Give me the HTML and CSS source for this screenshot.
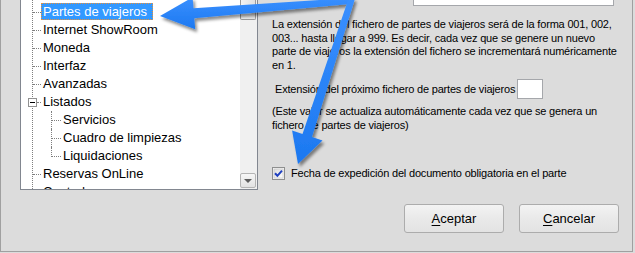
FILE: index.html
```html
<!DOCTYPE html>
<html lang="es">
<head>
<meta charset="utf-8">
<title>Partes de viajeros</title>
<link rel="stylesheet" href="styles.css">
</head>
<body>
<div class="dialog">
  <div class="tree-box">
    <div class="tree-content">
      <div class="level0">
        <div class="row"><span class="dots"></span><span class="label selected">Partes de viajeros</span></div>
        <div class="row"><span class="dots"></span><span class="label">Internet ShowRoom</span></div>
        <div class="row"><span class="dots"></span><span class="label">Moneda</span></div>
        <div class="row"><span class="dots"></span><span class="label">Interfaz</span></div>
        <div class="row"><span class="dots"></span><span class="label">Avanzadas</span></div>
        <div class="row"><span class="expander"></span><span class="dots short"></span><span class="label">Listados</span></div>
        <div class="children">
          <div class="crow"><span class="conn"></span><span class="label">Servicios</span></div>
          <div class="crow"><span class="conn"></span><span class="label">Cuadro de limpiezas</span></div>
          <div class="crow"><span class="conn"></span><span class="label">Liquidaciones</span></div>
        </div>
        <div class="row"><span class="dots"></span><span class="label">Reservas OnLine</span></div>
        <div class="row"><span class="dots"></span><span class="label">Contadores</span></div>
      </div>
    </div>
    <div class="scrollbar">
      <div class="thumb"></div>
      <div class="track"></div>
      <div class="arrow-btn"><span class="tri"></span></div>
    </div>
  </div>

  <div class="settings">
    <div class="top-field"></div>
    <p class="desc">La extensión del fichero de partes de viajeros será de la forma 001, 002,<br>003... hasta llegar a 999. Es decir, cada vez que se genere un nuevo<br>parte de viajeros la extensión del fichero se incrementará numéricamente<br>en 1.</p>
    <div class="ext-row">
      <span class="ext-label">Extensión del próximo fichero de partes de viajeros</span>
      <span class="ext-input"></span>
    </div>
    <p class="note">(Este valor se actualiza automáticamente cada vez que se genera un<br>fichero de partes de viajeros)</p>
    <div class="check-row">
      <svg class="checkbox" width="13" height="13" viewBox="0 0 13 13">
        <defs>
          <linearGradient id="cbg" x1="0" y1="0" x2="1" y2="1">
            <stop offset="0" stop-color="#dcdcdc"/>
            <stop offset="1" stop-color="#ffffff"/>
          </linearGradient>
        </defs>
        <rect x="0.5" y="0.5" width="12" height="12" fill="#f4f4f4" stroke="#8e8f8f"/>
        <rect x="2" y="2" width="9" height="9" fill="url(#cbg)" stroke="#c4c4c4" stroke-width="0.6"/>
        <path d="M3 6.3 L5.4 8.8 L10 3.6" fill="none" stroke="#1f3fbf" stroke-width="2"/>
      </svg>
      <span class="check-label">Fecha de expedición del documento obligatoria en el parte</span>
    </div>
    <div class="buttons">
      <div class="btn"><u>A</u>ceptar</div>
      <div class="btn"><u>C</u>ancelar</div>
    </div>
  </div>
</div>

<svg class="annotations" width="635" height="253" viewBox="0 0 635 253">
  <defs>
    <filter id="shadow" x="-20%" y="-20%" width="140%" height="140%">
      <feDropShadow dx="2" dy="3" stdDeviation="1.6" flood-color="#000" flood-opacity="0.45"/>
    </filter>
    <linearGradient id="blue" x1="0" y1="0" x2="0" y2="1">
      <stop offset="0" stop-color="#3a90ff"/>
      <stop offset="1" stop-color="#1c78f0"/>
    </linearGradient>
  </defs>
  <g filter="url(#shadow)" fill="url(#blue)">
    <polygon points="160,16 195.2,29.3 194.3,18.3 350.2,4 349.8,-2 193.5,8.3 192.6,-2.7"/>
    <polygon points="298,164 322.5,140.4 312,137 354.9,-1.1 349.1,-2.9 302.5,133.9 292.1,130.5"/>
  </g>
</svg>
</body>
</html>
```

FILE: styles.css
```css
html, body {
  margin: 0;
  padding: 0;
}

body {
  position: relative;
  width: 635px;
  height: 253px;
  overflow: hidden;
  background: #dcdcdc;
  font-family: "Liberation Sans", Arial, sans-serif;
  color: #000;
}

.dialog {
  box-sizing: border-box;
  width: 633px;
  height: 252px;
  border: 1px solid #a0a0a0;
  border-top: none;
  display: flex;
  align-items: flex-start;
}

/* ---------- tree ---------- */
.tree-box {
  box-sizing: border-box;
  margin-left: 19px;
  width: 238px;
  height: 190px;
  border: 1px solid #828790;
  border-top: none;
  background: #fff;
  display: flex;
}

.tree-content {
  flex: 1;
  overflow: hidden;
  padding-left: 11px;
}

.level0 {
  box-sizing: border-box;
  height: 189px;
  padding-top: 3px;
  border-left: 1px dotted #7f7f7f;
}

.row,
.crow {
  display: flex;
  align-items: flex-start;
  height: 18px;
}

.dots {
  box-sizing: border-box;
  flex: none;
  width: 8px;
  height: 10px;
  border-bottom: 1px dotted #7f7f7f;
}

.dots.short {
  width: 4px;
}

.expander {
  box-sizing: border-box;
  flex: none;
  width: 9px;
  height: 9px;
  margin-top: 5px;
  margin-left: -5px;
  border: 1px solid #919191;
  background: linear-gradient(#000, #000) center / 5px 1px no-repeat, #fff;
}

.label {
  box-sizing: border-box;
  height: 17px;
  line-height: 15px;
  padding: 0 1px;
  border: 1px solid transparent;
  font-size: 13px;
  white-space: nowrap;
}

.label.selected {
  background: #3399ff;
  color: #fff;
  border: 1px dotted #e8913a;
  padding-right: 5px;
}

.children {
  margin-left: 18px;
}

.crow {
  border-left: 1px dotted #7f7f7f;
}

.crow:last-child {
  border-left: none;
}

.conn {
  box-sizing: border-box;
  flex: none;
  width: 9px;
  height: 10px;
  border-bottom: 1px dotted #7f7f7f;
}

.crow:last-child .conn {
  width: 10px;
  border-left: 1px dotted #7f7f7f;
}

/* ---------- scrollbar ---------- */
.scrollbar {
  flex: none;
  width: 17px;
  background: #f0f0f0;
  display: flex;
  flex-direction: column;
}

.thumb {
  box-sizing: border-box;
  height: 20px;
  margin: 0 1px 0 0;
  border: 1px solid #9a9a9a;
  border-top: none;
  border-radius: 0 0 2px 2px;
  background: linear-gradient(to right, #f3f3f3, #e0e0e0);
}

.track {
  flex: 1;
}

.arrow-btn {
  box-sizing: border-box;
  height: 15px;
  margin: 0 1px 1px 0;
  border: 1px solid #b4b4b4;
  border-radius: 2px;
  background: linear-gradient(#f6f6f6, #e2e2e2);
  display: flex;
  align-items: center;
  justify-content: center;
}

.tri {
  width: 0;
  height: 0;
  border-left: 4px solid transparent;
  border-right: 4px solid transparent;
  border-top: 4px solid #5d5d5d;
}

/* ---------- settings ---------- */
.settings {
  flex: 1;
  margin-left: 14px;
  display: flex;
  flex-direction: column;
  font-size: 11px;
  letter-spacing: -0.18px;
}

.top-field {
  box-sizing: border-box;
  margin-left: 141px;
  width: 201px;
  height: 6px;
  border: 1px solid #a5a7ab;
  border-top: none;
  background: #fff;
}

.desc {
  margin: 12px 0 0;
  line-height: 13.6px;
  white-space: nowrap;
}

.ext-row {
  margin-top: 6.6px;
  display: flex;
  align-items: center;
  height: 20px;
}

.ext-label {
  margin-left: 3px;
  width: 242px;
  white-space: nowrap;
}

.ext-input {
  box-sizing: border-box;
  width: 26px;
  height: 20px;
  border: 1px solid #a5a7ab;
  background: #fff;
}

.note {
  margin: 5px 0 0;
  line-height: 14px;
  white-space: nowrap;
}

.check-row {
  margin-top: 35px;
  height: 13px;
  display: flex;
  align-items: center;
}

.checkbox {
  flex: none;
  display: block;
}

.check-label {
  margin-left: 6px;
  white-space: nowrap;
}

.buttons {
  margin-top: 24px;
  display: flex;
  justify-content: flex-end;
  gap: 15px;
  padding-right: 13px;
}

.btn {
  box-sizing: border-box;
  width: 100px;
  height: 29px;
  border: 1px solid #acacac;
  border-radius: 3px;
  background: linear-gradient(#f3f3f3, #e9e9e9 50%, #e3e3e3);
  font-size: 13px;
  letter-spacing: 0;
  display: flex;
  align-items: center;
  justify-content: center;
}

.btn u {
  text-decoration-thickness: 1px;
  text-underline-offset: 2px;
}

/* ---------- annotations ---------- */
.annotations {
  position: absolute;
  left: 0;
  top: 0;
  pointer-events: none;
}
```
